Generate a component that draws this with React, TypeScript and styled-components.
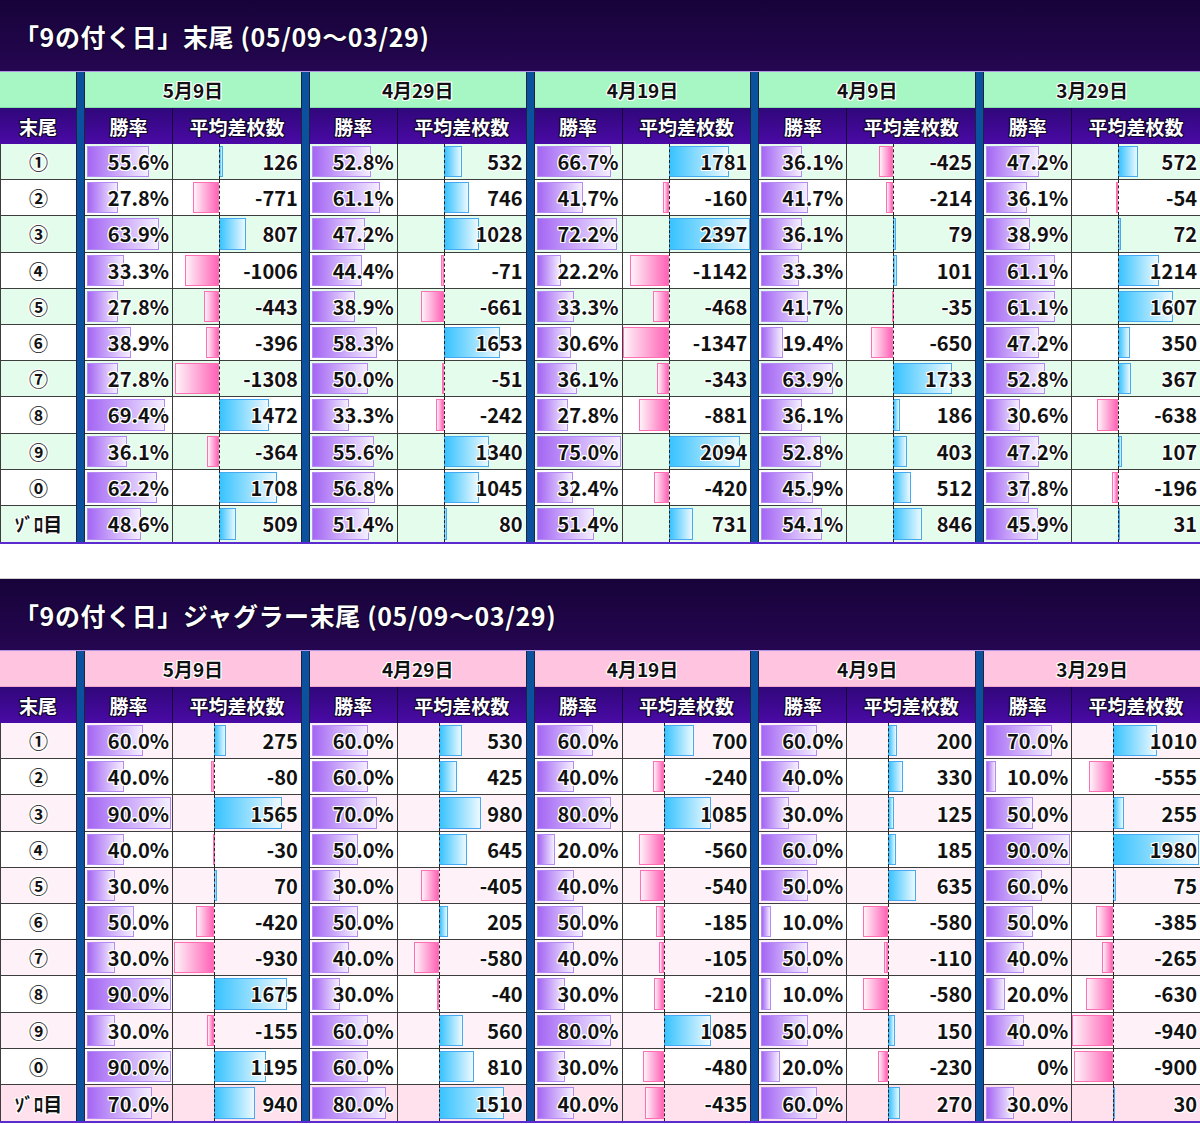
import React from "react";
import styled, { createGlobalStyle, css } from "styled-components";

type Variant = "green" | "pink";
type Entry = [number, number];

const DATES = ["5月9日", "4月29日", "4月19日", "4月9日", "3月29日"];
const LABELS = ["①", "②", "③", "④", "⑤", "⑥", "⑦", "⑧", "⑨", "⓪", "ｿﾞﾛ目"];

const ALL_TAIL: Entry[][] = [
  [[55.6, 126], [52.8, 532], [66.7, 1781], [36.1, -425], [47.2, 572]],
  [[27.8, -771], [61.1, 746], [41.7, -160], [41.7, -214], [36.1, -54]],
  [[63.9, 807], [47.2, 1028], [72.2, 2397], [36.1, 79], [38.9, 72]],
  [[33.3, -1006], [44.4, -71], [22.2, -1142], [33.3, 101], [61.1, 1214]],
  [[27.8, -443], [38.9, -661], [33.3, -468], [41.7, -35], [61.1, 1607]],
  [[38.9, -396], [58.3, 1653], [30.6, -1347], [19.4, -650], [47.2, 350]],
  [[27.8, -1308], [50.0, -51], [36.1, -343], [63.9, 1733], [52.8, 367]],
  [[69.4, 1472], [33.3, -242], [27.8, -881], [36.1, 186], [30.6, -638]],
  [[36.1, -364], [55.6, 1340], [75.0, 2094], [52.8, 403], [47.2, 107]],
  [[62.2, 1708], [56.8, 1045], [32.4, -420], [45.9, 512], [37.8, -196]],
  [[48.6, 509], [51.4, 80], [51.4, 731], [54.1, 846], [45.9, 31]],
];

const JUGGLER_TAIL: Entry[][] = [
  [[60, 275], [60, 530], [60, 700], [60, 200], [70, 1010]],
  [[40, -80], [60, 425], [40, -240], [40, 330], [10, -555]],
  [[90, 1565], [70, 980], [80, 1085], [30, 125], [50, 255]],
  [[40, -30], [50, 645], [20, -560], [60, 185], [90, 1980]],
  [[30, 70], [30, -405], [40, -540], [50, 635], [60, 75]],
  [[50, -420], [50, 205], [50, -185], [10, -580], [50, -385]],
  [[30, -930], [40, -580], [40, -105], [50, -110], [40, -265]],
  [[90, 1675], [30, -40], [30, -210], [10, -580], [20, -630]],
  [[30, -155], [60, 560], [80, 1085], [50, 150], [40, -940]],
  [[90, 1195], [60, 810], [30, -480], [20, -230], [0, -900]],
  [[70, 940], [80, 1510], [40, -435], [60, 270], [30, 30]],
];

const palette = {
  green: { date: "#a6f7c4", dateEdge: "#86dfa4", alt: "#e3fcec", zoro: "#e3fcec" },
  pink: { date: "#ffc4e0", dateEdge: "#f2a6cb", alt: "#fff1f8", zoro: "#ffe1ee" },
};

// widths of the longest data bars, px
const RATE_BAR = 84;
const DIFF_BAR = 127;

const GlobalStyle = createGlobalStyle`
  body {
    margin: 0;
    background: #fff;
    font-family: "Noto Sans CJK JP", "Noto Sans", sans-serif;
  }
`;

const whiteHalo = css`
  text-shadow: -1px -1px 0 #fff, 1px -1px 0 #fff, -1px 1px 0 #fff, 1px 1px 0 #fff,
    0 -1px 0 #fff, 0 1px 0 #fff, -1px 0 0 #fff, 1px 0 0 #fff;
`;

const darkHalo = css`
  text-shadow: -1px -1px 0 #12052e, 1px -1px 0 #12052e, -1px 1px 0 #12052e, 1px 1px 0 #12052e,
    0 -1px 0 #12052e, 0 1px 0 #12052e, -1px 0 0 #12052e, 1px 0 0 #12052e;
`;

const Page = styled.div`
  width: 1200px;
  display: flex;
  flex-direction: column;
`;

const Gap = styled.div`
  height: 34px;
  border-bottom: 1px solid #cfcfcf;
`;

const TitleBar = styled.div`
  height: 71px;
  display: flex;
  align-items: center;
  padding-left: 14px;
  background: linear-gradient(#170339, #250651);
  border-bottom: 1px solid #b392e6;
`;

const Title = styled.h1`
  margin: 0;
  color: #fff;
  font-size: 25px;
  font-weight: 700;
  letter-spacing: 0.6px;
  ${darkHalo}
`;

const Table = styled.div`
  display: grid;
  grid-template-columns: 76px repeat(5, 9px 88px 1fr);
  grid-template-rows: 36px 36px repeat(11, 36.2px);
  border-bottom: 2px solid #5b2bd0;
`;

const Separator = styled.div<{ $col: number }>`
  grid-column: ${(p) => p.$col};
  grid-row: 1 / -1;
  background: #0b519d;
  border-left: 1px solid #1b2440;
  border-right: 1px solid #1b2440;
  box-sizing: border-box;
`;

const DateCell = styled.div<{ $variant: Variant; $span?: number }>`
  grid-column: span ${(p) => p.$span ?? 2};
  background: ${(p) => palette[p.$variant].date};
  border-bottom: 1px solid ${(p) => palette[p.$variant].dateEdge};
  display: flex;
  align-items: center;
  justify-content: center;
  font-size: 19px;
  font-weight: 700;
  color: #111;
  ${whiteHalo}
`;

const HeadCell = styled.div<{ $divider?: boolean }>`
  background: linear-gradient(#30077a, #4a0aa6);
  display: flex;
  align-items: center;
  justify-content: center;
  color: #fff;
  font-size: 19px;
  font-weight: 700;
  border-right: ${(p) => (p.$divider ? "1px solid #160636" : "none")};
  ${darkHalo}
`;

const BodyCell = styled.div<{ $bg: string; $last: boolean }>`
  position: relative;
  background: ${(p) => p.$bg};
  border-bottom: ${(p) => (p.$last ? "none" : "1px solid #3d3d3d")};
  box-sizing: border-box;
  display: flex;
  align-items: center;
  font-size: 20px;
  font-weight: 700;
  color: #111;
  overflow: hidden;
`;

const LabelCell = styled(BodyCell)`
  justify-content: center;
  font-size: 19px;
  border-left: 1px solid #3d3d3d;
`;

const RateCell = styled(BodyCell)`
  justify-content: flex-end;
  padding-right: 3px;
  border-right: 1px solid #3d3d3d;
`;

const DiffCell = styled(BodyCell)`
  justify-content: flex-end;
  padding-right: 3px;
`;

const Value = styled.span`
  position: relative;
  z-index: 2;
  ${whiteHalo}
`;

const RateBar = styled.div`
  position: absolute;
  left: 2px;
  top: 2px;
  bottom: 2px;
  background: linear-gradient(90deg, #a466f4, #f4eeff);
  border: 1px solid #b58af3;
  box-sizing: border-box;
`;

const DiffBar = styled.div<{ $neg: boolean }>`
  position: absolute;
  top: 2px;
  bottom: 2px;
  box-sizing: border-box;
  ${(p) =>
    p.$neg
      ? css`
          background: linear-gradient(90deg, #fff2f9, #ff63b6);
          border: 1px solid #ff6fb4;
        `
      : css`
          background: linear-gradient(90deg, #38c3ff, #ecf9ff);
          border: 1px solid #47a9f0;
        `}
`;

const Axis = styled.div`
  position: absolute;
  top: 0;
  bottom: 0;
  width: 0;
  border-left: 1px dashed #222;
  z-index: 1;
`;

const formatRate = (r: number) => (r === 0 ? "0%" : `${r.toFixed(1)}%`);

type SectionProps = { title: string; variant: Variant; data: Entry[][] };

const Section = ({ title, variant, data }: SectionProps) => {
  const flat = data.flat();
  const maxRate = Math.max(...flat.map((e) => e[0]));
  const maxDiff = Math.max(...flat.map((e) => e[1]));
  const minDiff = Math.min(...flat.map((e) => e[1]));
  const unit = DIFF_BAR / (maxDiff - minDiff);
  const axis = Math.round(-minDiff * unit);

  return (
    <section>
      <TitleBar>
        <Title>{title}</Title>
      </TitleBar>
      <Table>
        {DATES.map((_, i) => (
          <Separator key={`sep${i}`} $col={2 + i * 3} />
        ))}
        <DateCell $variant={variant} $span={1} />
        {DATES.map((d) => (
          <DateCell key={d} $variant={variant}>
            {d}
          </DateCell>
        ))}
        <HeadCell>末尾</HeadCell>
        {DATES.map((d) => (
          <React.Fragment key={`h${d}`}>
            <HeadCell $divider>勝率</HeadCell>
            <HeadCell>平均差枚数</HeadCell>
          </React.Fragment>
        ))}
        {data.map((row, r) => {
          const last = r === data.length - 1;
          const bg = last ? palette[variant].zoro : r % 2 === 0 ? palette[variant].alt : "#ffffff";
          return (
            <React.Fragment key={LABELS[r]}>
              <LabelCell $bg={bg} $last={last}>
                <Value>{LABELS[r]}</Value>
              </LabelCell>
              {row.map(([rate, diff], c) => {
                const w = Math.abs(diff) * unit;
                return (
                  <React.Fragment key={c}>
                    <RateCell $bg={bg} $last={last}>
                      {rate > 0 && <RateBar style={{ width: (rate / maxRate) * RATE_BAR }} />}
                      <Value>{formatRate(rate)}</Value>
                    </RateCell>
                    <DiffCell $bg={bg} $last={last}>
                      <DiffBar
                        $neg={diff < 0}
                        style={{ left: diff < 0 ? axis - w : axis, width: Math.max(w, 1.5) }}
                      />
                      <Axis style={{ left: axis }} />
                      <Value>{diff}</Value>
                    </DiffCell>
                  </React.Fragment>
                );
              })}
            </React.Fragment>
          );
        })}
      </Table>
    </section>
  );
};

export default function App() {
  return (
    <Page>
      <GlobalStyle />
      <Section title="「9の付く日」末尾 (05/09～03/29)" variant="green" data={ALL_TAIL} />
      <Gap />
      <Section title="「9の付く日」ジャグラー末尾 (05/09～03/29)" variant="pink" data={JUGGLER_TAIL} />
    </Page>
  );
}
